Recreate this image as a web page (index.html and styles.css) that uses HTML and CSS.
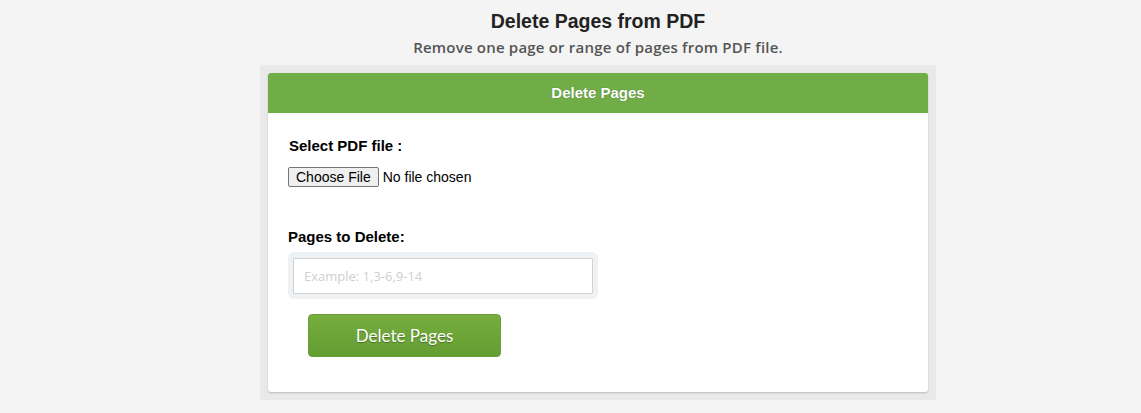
FILE: index.html
```html
<!DOCTYPE html>
<html lang="en">
<head>
<meta charset="utf-8">
<title>Delete Pages from PDF</title>
<link rel="stylesheet" href="styles.css">
</head>
<body>
<div class="page">
<header class="intro">
  <h1 class="intro-title">Delete Pages from PDF</h1>
  <p class="intro-sub">Remove one page or range of pages from PDF file.</p>
</header>
<main class="frame">
  <section class="card">
    <div class="card-head">Delete Pages</div>
    <form class="card-body">
      <label class="field-label" for="pages">Select PDF file :</label>
      <div class="file-row">
        <span class="file-btn">Choose File</span><span class="file-name">No file chosen</span>
      </div>
      <label class="field-label pages-label" for="pages">Pages to Delete:</label>
      <div class="input-wrap">
        <input class="pages-input" id="pages" type="text" placeholder="Example: 1,3-6,9-14">
      </div>
      <button class="submit" type="button">Delete Pages</button>
    </form>
  </section>
</main>
</div>
</body>
</html>
```
FILE: styles.css
```css
html, body { margin: 0; padding: 0; }
body {
  background: #f4f4f4;
  font-family: "Liberation Sans", Arial, sans-serif;
  color: #000;
}
.page { padding-left: 55px; }
.intro { text-align: center; padding-top: 10px; }
.intro-title {
  margin: 0;
  font-size: 19.5px;
  line-height: 23px;
  font-weight: bold;
  color: #222;
}
.intro-sub {
  margin: 4px 0 0;
  font-family: "Open Sans", "Noto Sans", sans-serif;
  font-size: 15px;
  line-height: 20px;
  font-weight: 600;
  letter-spacing: 0.2px;
  color: #555;
}
.frame {
  width: 660px;
  margin: 8px auto 0;
  padding: 8px;
  background: #e9e9e9;
  border-radius: 3px;
}
.card {
  background: #fff;
  border-radius: 3px;
  box-shadow: 0 1px 2px rgba(0,0,0,0.2);
  overflow: hidden;
}
.card-head {
  height: 40px;
  line-height: 40px;
  background: #70ad47;
  color: #fff;
  text-align: center;
  font-weight: bold;
  font-size: 15px;
  text-shadow: 0 0 1px rgba(0,0,0,0.4);
}
.card-body {
  display: flex;
  flex-direction: column;
  align-items: flex-start;
  padding: 24px 20px 35px;
}
.field-label {
  font-weight: bold;
  font-size: 15px;
  line-height: 17px;
  margin-left: 1px;
}
.file-row {
  display: flex;
  align-items: center;
  margin-top: 13px;
  font-size: 14px;
}
.file-btn {
  display: inline-block;
  padding: 1px 7px;
  line-height: 16px;
  border: 1px solid #767676;
  border-radius: 2px;
  background: #efefef;
  color: #000;
}
.file-name { margin-left: 4px; }
.pages-label {
  margin-top: 41px;
  margin-left: 0;
}
.input-wrap {
  margin-top: 7px;
  padding: 6px 5px 5px;
  background: #eef2f5;
  border-radius: 6px;
}
.pages-input {
  display: block;
  box-sizing: border-box;
  width: 300px;
  height: 36px;
  border: 1px solid #cfd3d6;
  border-radius: 1px;
  padding: 0 10px;
  font-family: "Open Sans", "Noto Sans", sans-serif;
  font-size: 13px;
  font-weight: 400;
  outline: none;
}
.pages-input::placeholder { color: #cfcfcf; }
.submit {
  margin: 15px 0 0 20px;
  width: 193px;
  height: 43px;
  border: 1px solid #6a9f3a;
  border-radius: 4px;
  background: linear-gradient(#76ad3e, #649d32);
  color: #fff;
  font-family: "Lato", "Open Sans", sans-serif;
  font-size: 17px;
  text-shadow: 0 1px 1px rgba(0,0,0,0.3);
  cursor: pointer;
}
```
